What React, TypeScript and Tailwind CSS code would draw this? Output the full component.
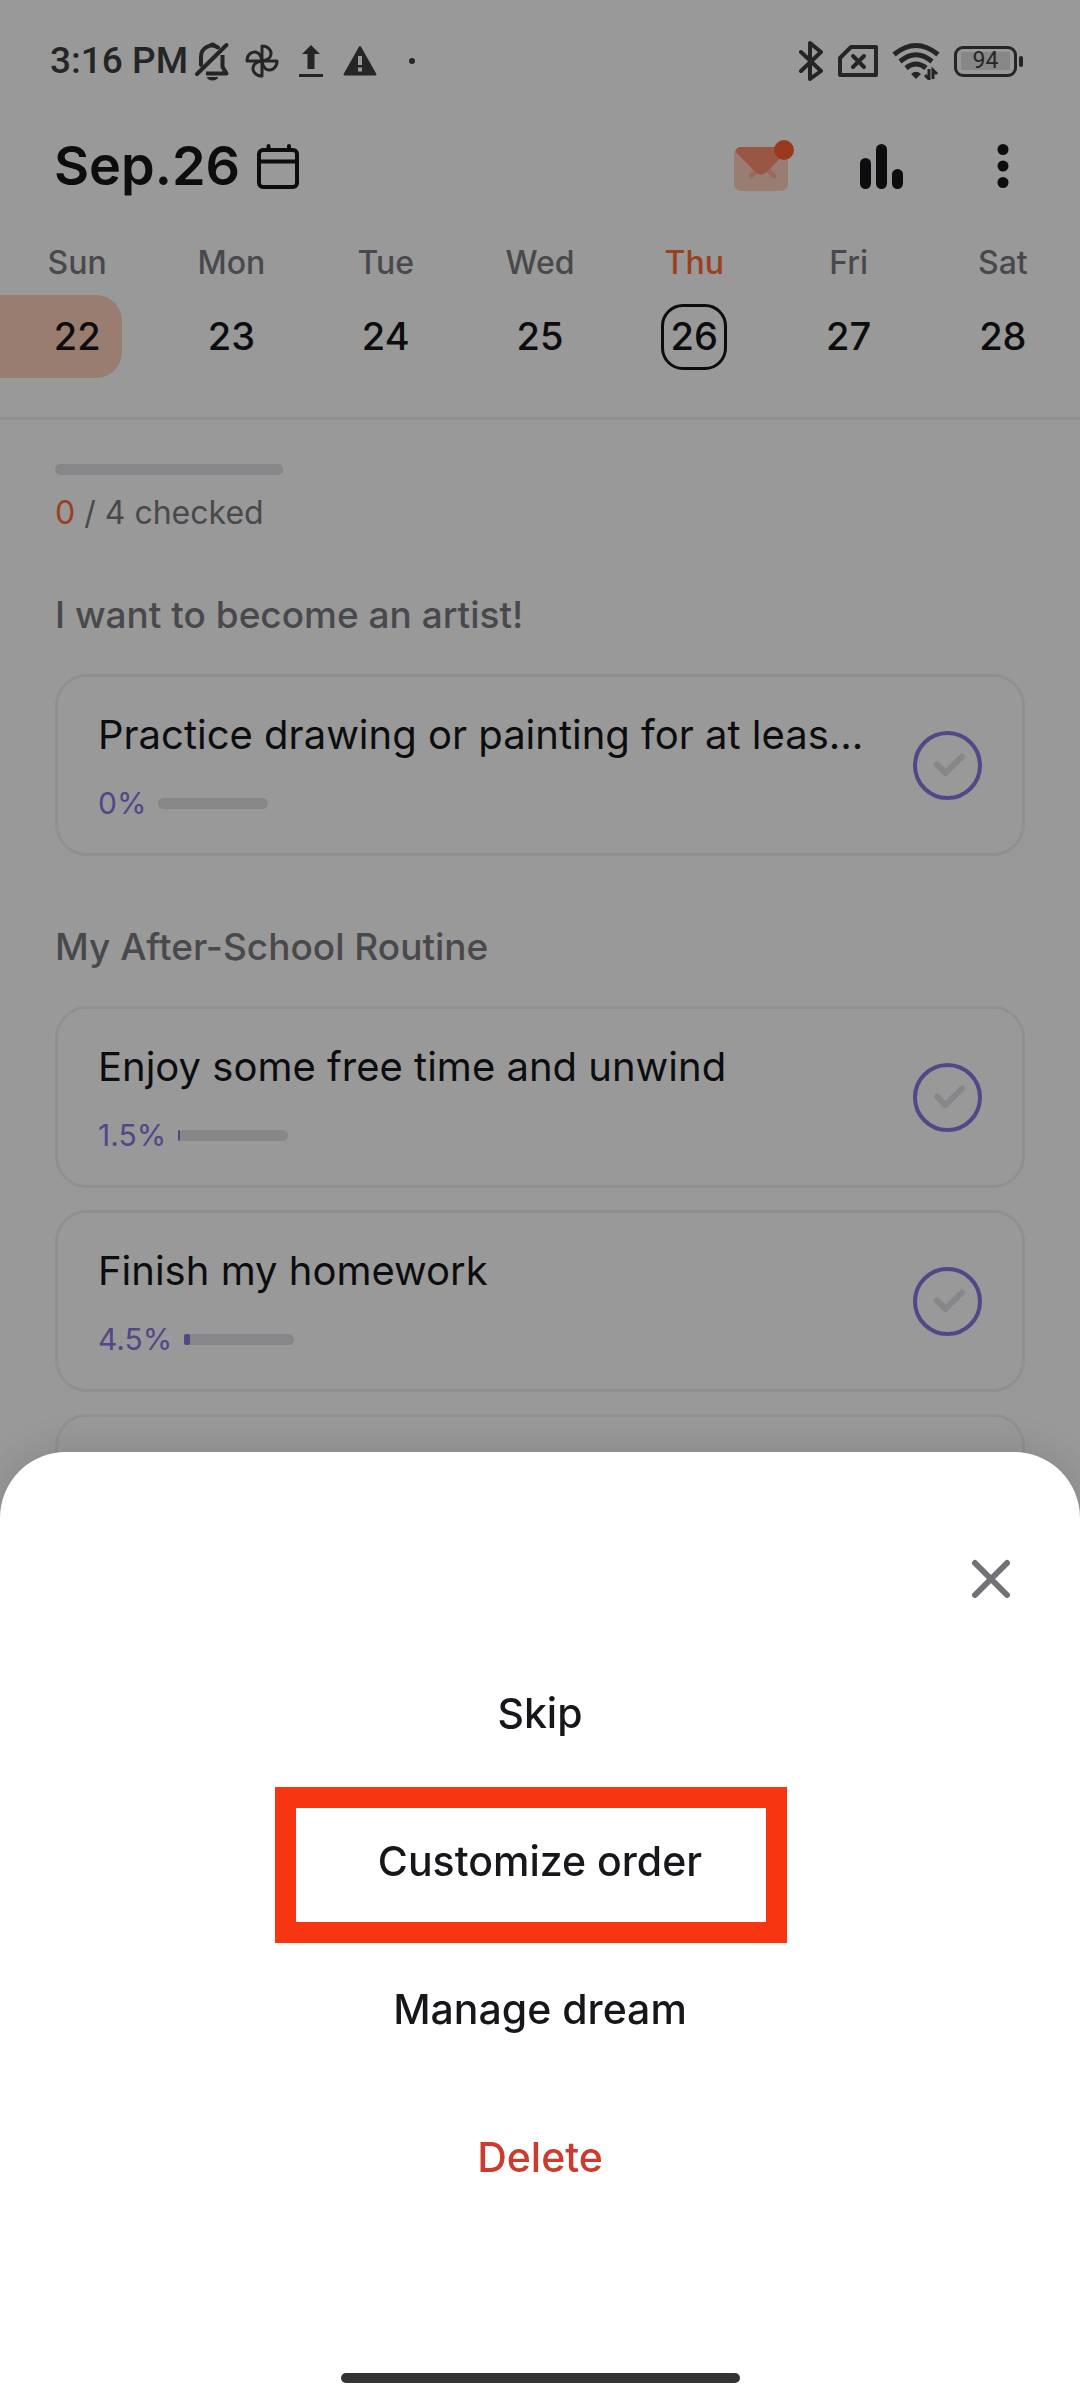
import { clsx } from "clsx";

const days = [
  { name: "Sun", date: 22 },
  { name: "Mon", date: 23 },
  { name: "Tue", date: 24 },
  { name: "Wed", date: 25 },
  { name: "Thu", date: 26 },
  { name: "Fri", date: 27 },
  { name: "Sat", date: 28 },
];

const today = 26;
const selected = 22;

const StatusBar = () => {
  return (
    <div className="flex items-center justify-between h-[122px] pl-[50px] pr-[57px] text-[#3f3f3f]">
      <div className="flex items-center">
        <span className="font-[Roboto,sans-serif] text-[37px] font-medium">3:16 PM</span>
        <svg className="ml-[6px]" width="36" height="40" viewBox="0 0 36 40" fill="none" stroke="currentColor" strokeWidth="4" strokeLinecap="round">
          <path d="M7 24V16a11 11 0 0 1 17-9.500" />
          <path d="M32.500 4 3 33" />
          <path d="M12 32.500H32.500L28.500 26V14" strokeLinecap="butt" strokeLinejoin="round" />
          <path d="M13 36h11a5.500 3.500 0 0 1-11 0z" fill="currentColor" stroke="none" />
          <path d="M15 3.500a4 4 0 0 1 7 0z" fill="currentColor" stroke="none" />
        </svg>
        {/* four outlined blades, each turned a quarter from the last */}
        <svg className="ml-[15px]" width="34" height="34" viewBox="0 0 34 34" fill="none" stroke="currentColor" strokeWidth="3" strokeLinejoin="round">
          <path d="M17 17V2C24 2 28 8 25 13Q23 16 17 17z" />
          <path d="M17 17H32C32 24 26 28 21 25Q18 23 17 17z" />
          <path d="M17 17V32C10 32 6 26 9 21Q11 18 17 17z" />
          <path d="M17 17H2C2 10 8 6 13 9Q16 11 17 17z" />
        </svg>
        <svg className="ml-5" width="24" height="34" viewBox="0 0 24 34" fill="currentColor">
          <path d="M12 1 21 10H15.500V25H8.500V10H3z" />
          <path d="M0 30h24v3H0z" />
        </svg>
        <svg className="ml-5" width="34" height="30" viewBox="0 0 34 30">
          <path d="M17 1 32.500 28.500H1.500z" fill="currentColor" stroke="currentColor" strokeWidth="2" strokeLinejoin="round" />
          <path d="M15 10h4v9h-4zM15 21.500h4v4h-4z" fill="#fff" />
        </svg>
        <span className="ml-8 size-[6px] rounded-full bg-[#3f3f3f]" />
      </div>

      <div className="flex items-center">
        <svg width="26" height="40" viewBox="0 0 26 40" fill="none" stroke="currentColor" strokeWidth="4" strokeLinecap="round" strokeLinejoin="round">
          <path d="M3 11 23 30 12 38V2L23 11 3 30" />
        </svg>
        <svg className="ml-[14px]" width="40" height="34" viewBox="0 0 40 34" fill="none" stroke="currentColor" strokeWidth="4" strokeLinejoin="round">
          <path d="M13 3H38V31H2V14z" />
          <path d="M15 12 26 23M26 12 15 23" strokeLinecap="round" />
        </svg>
        <svg className="ml-[14px]" width="48" height="38" viewBox="0 0 48 38" fill="none" stroke="currentColor" strokeWidth="5">
          <path d="M2 12.500Q24-5.500 46 12.500" />
          <path d="M8 19.500Q24 6 40 19.500" />
          <path d="M14 26Q24 18 34 26" />
          <path d="M19 32Q24 27.500 29 32L24 37z" fill="currentColor" stroke="none" />
          <path d="M37 27v10l-4-4M41 37V28l4 4" strokeWidth="3" />
        </svg>
        <div className="ml-[14px] flex h-[31px] w-[63px] items-center justify-center rounded-[9px] border-3 border-[#3f3f3f] p-1">
          <span className="flex h-[18px] w-full items-center justify-center bg-[#e2e2e2] font-[Roboto,sans-serif] text-[23px]">94</span>
        </div>
        <span className="ml-[2px] h-[11px] w-1 rounded-sm bg-[#3f3f3f]" />
      </div>
    </div>
  );
};

const Header = () => {
  return (
    <header className="flex items-center justify-between h-[88px] pl-[54px] pr-[57px] text-[#17171b]">
      <button className="flex items-center gap-4">
        <span className="text-[54px] leading-[64px] font-semibold">Sep.26</span>
        <svg width="44" height="46" viewBox="0 0 44 46" fill="none" stroke="currentColor" strokeWidth="4">
          <rect x="3" y="7" width="38" height="37" rx="4" />
          <path d="M3 18.500H41" />
          <path d="M12.500 3V6M33 3V6" strokeLinecap="round" />
        </svg>
      </button>

      <div className="flex items-center">
        <button aria-label="Messages">
          <svg width="62" height="54" viewBox="0 0 62 54">
            <rect x="1" y="8" width="54" height="44" rx="7" fill="#ffd1c0" />
            <path d="M18 37 24 31M41 37 35 31" stroke="#ffb09a" strokeWidth="5" strokeLinecap="round" />
            <path d="M8 8H48Q54 8 53.500 13L33 33.500Q28 38 23 33.500L2.500 13Q3 8 8 8z" fill="#ff9170" />
            <circle cx="51" cy="11" r="10" fill="#ff612f" />
          </svg>
        </button>
        <button aria-label="Statistics" className="ml-[65px]">
          <svg width="44" height="46" viewBox="0 0 44 46" fill="currentColor">
            <rect x="0" y="15" width="11" height="31" rx="5.500" />
            <rect x="16" y="1" width="11" height="45" rx="5.500" />
            <rect x="32" y="26" width="11" height="20" rx="5.500" />
          </svg>
        </button>
        <button aria-label="More" className="ml-[78px] flex w-[41px] justify-center">
          <svg width="12" height="46" viewBox="0 0 12 46" fill="currentColor">
            <circle cx="6" cy="6.500" r="5.500" />
            <circle cx="6" cy="23" r="5.500" />
            <circle cx="6" cy="39.500" r="5.500" />
          </svg>
        </button>
      </div>
    </header>
  );
};

const Week = () => {
  return (
    <nav className="grid grid-cols-7 pt-[33px] pb-[39px] border-b-3 border-[#f0f0f0]">
      {days.map((day) => (
        <button key={day.name} className="flex flex-col items-center gap-3">
          <span
            className={clsx(
              "text-[32px] leading-10 font-medium",
              day.date === today ? "text-[#ff6b34]" : "text-[#7b7b80]"
            )}
          >
            {day.name}
          </span>
          <span
            className={clsx(
              "flex h-[83px] w-full items-center",
              day.date === selected && "pr-8"
            )}
          >
            <span
              className={clsx(
                "flex items-center justify-center text-[38px] font-medium text-[#17171b]",
                day.date === selected && "h-full w-full rounded-r-[26px] bg-[#ffd0bb] pl-8",
                day.date === today && "mx-auto size-[66px] rounded-[22px] border-3 border-[#17171b]",
                day.date !== selected && day.date !== today && "w-full"
              )}
            >
              {day.date}
            </span>
          </span>
        </button>
      ))}
    </nav>
  );
};

type TaskProps = {
  title: string;
  percent: number;
};

const Task = ({ title, percent }: TaskProps) => {
  return (
    <li className="flex items-center justify-between gap-6 rounded-[32px] border-3 border-[#f1f1f1] py-[30px] pl-10 pr-10">
      <div className="min-w-0">
        <p className="truncate text-[40px] leading-[56px] text-[#17171b]">{title}</p>
        <div className="mt-5 flex items-center gap-3 text-[30px] leading-10 text-[#8c76e1]">
          {percent}%
          <div className="h-[11px] w-[110px] rounded-full bg-[#e1e1e6]">
            <div className="h-full rounded-xs bg-[#8c76e1]" style={{ width: `${percent * 1.2}%` }} />
          </div>
        </div>
      </div>

      <label className="relative shrink-0">
        <input
          type="checkbox"
          aria-label={title}
          className="block size-[69px] appearance-none rounded-full border-4 border-[#8c76e1]"
        />
        <svg className="absolute inset-0" width="69" height="69" viewBox="0 0 69 69" fill="none" stroke="#e1dfe6" strokeWidth="6" strokeLinecap="round" strokeLinejoin="round">
          <path d="M24 33.500 32.500 42 49 25.500" />
        </svg>
      </label>
    </li>
  );
};

const SectionTitle = ({ text }: { text: string }) => (
  <h2 className="text-[37px] leading-[48px] font-medium text-[#7b7b80]">{text}</h2>
);

const BottomSheet = () => {
  return (
    <div className="fixed inset-0 flex flex-col justify-end bg-black/40">
      <div
        role="dialog"
        aria-label="Options"
        className="flex flex-col items-center rounded-t-[66px] bg-white pt-[95px] pb-[17px] shadow-[0_0_48px_rgba(0,0,0,0.15)] text-[41px] font-medium text-[#17171b]"
      >
        <button aria-label="Close" className="mr-[57px] self-end">
          <svg width="64" height="64" viewBox="0 0 64 64" fill="none" stroke="#717177" strokeWidth="6" strokeLinecap="round">
            <path d="M16 16 48 48M48 16 16 48" />
          </svg>
        </button>

        <div className="mt-[29px] flex w-full flex-col">
          <button className="h-[148px]">Skip</button>
          <button className="relative h-[148px]">
            Customize order
            <span className="absolute left-1/2 -top-[1px] h-[156px] w-[512px] -translate-x-[265px] border-21 border-[#f73511]" />
          </button>
          <button className="h-[148px]">Manage dream</button>
          <button className="h-[148px] text-[#cc3b2b]">Delete</button>
        </div>

        <div className="mt-[141px] h-[10px] w-[399px] rounded-full bg-[#333]" />
      </div>
    </div>
  );
};

const App = () => {
  return (
    <div className="min-h-screen bg-white font-[Inter,sans-serif]">
      <StatusBar />
      <Header />
      <Week />

      <main className="px-[55px] pt-11">
        <div className="h-[11px] w-[228px] rounded-full bg-[#e1e1e6]" />
        <p className="mt-[18px] text-[32px] leading-10 text-[#7b7b80]">
          <span className="text-[#ff6b34]">0</span> / 4 checked
        </p>

        <section className="mt-[58px]">
          <SectionTitle text="I want to become an artist!" />
          <ul className="mt-[35px] flex flex-col gap-[22px]">
            <Task title="Practice drawing or painting for at leas..." percent={0} />
          </ul>
        </section>

        <section className="mt-[67px]">
          <SectionTitle text="My After-School Routine" />
          <ul className="mt-[35px] flex flex-col gap-[22px]">
            <Task title="Enjoy some free time and unwind" percent={1.5} />
            <Task title="Finish my homework" percent={4.5} />
            <li className="h-[182px] rounded-[32px] border-3 border-[#f1f1f1]" />
          </ul>
        </section>
      </main>

      <BottomSheet />
    </div>
  );
};

export default App;
